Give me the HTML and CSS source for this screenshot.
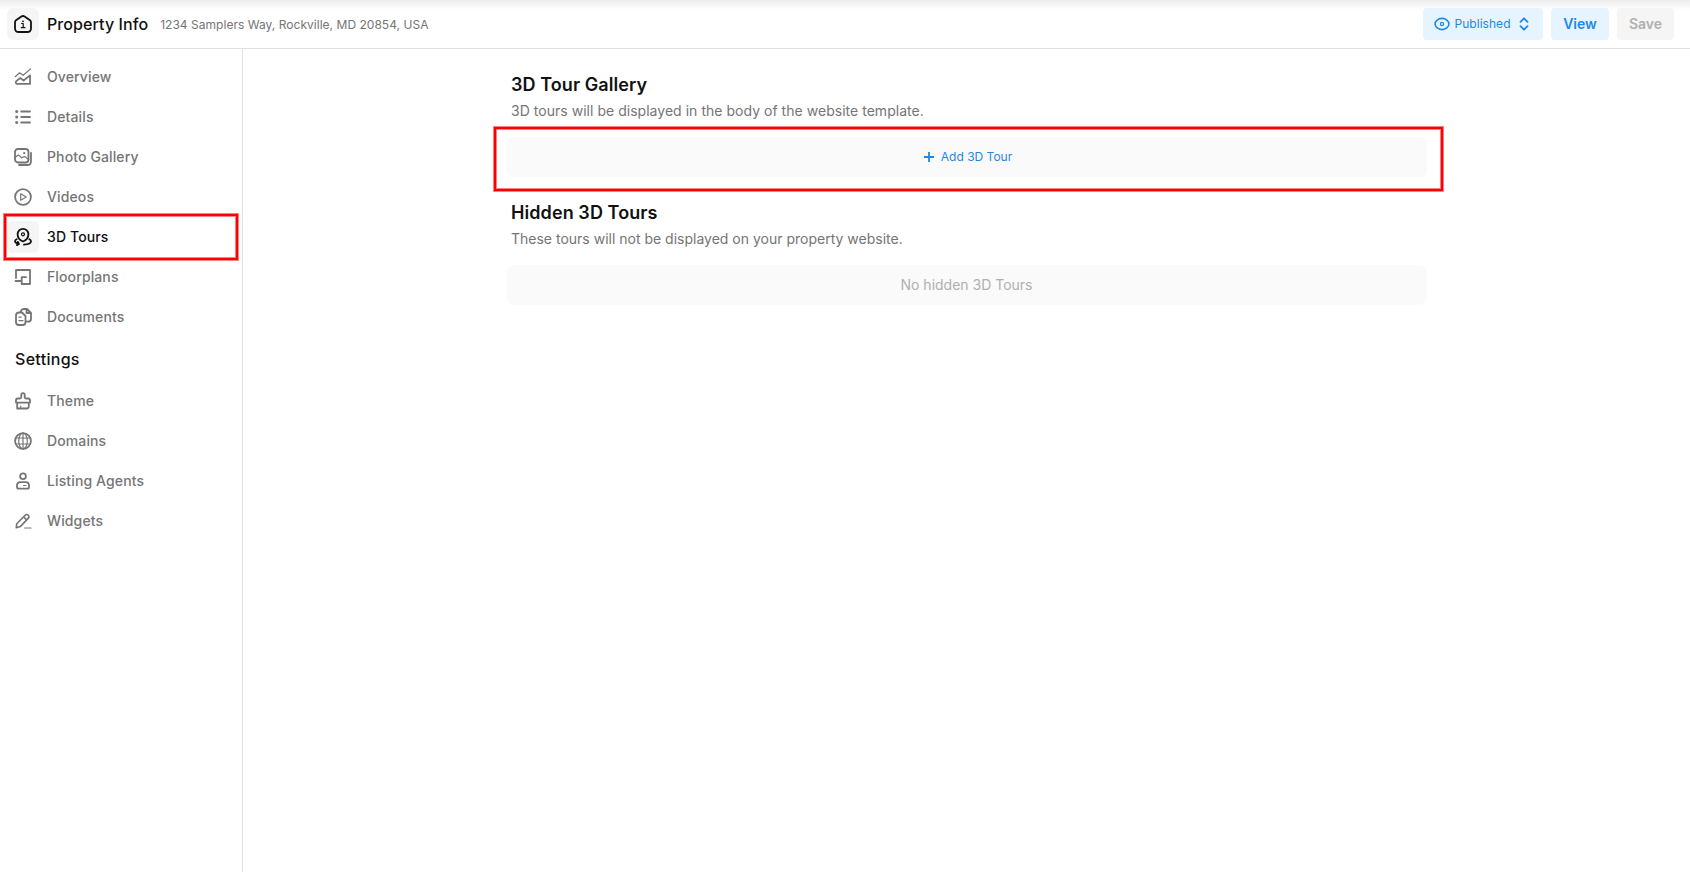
FILE: index.html
```html
<!DOCTYPE html>
<html lang="en">
<head>
<meta charset="utf-8">
<title>Property Info</title>
<link rel="stylesheet" href="styles.css">
</head>
<body>
<header class="topbar">
  <span class="icon-box icon-box-active">
    <svg class="icon icon-home" viewBox="0 0 18 18"><path d="M1 7.200Q1 6 2 5.300L7.400 1.500Q9 .5 10.600 1.500L16 5.300Q17 6 17 7.200V13.200Q17 17 13.200 17H4.800Q1 17 1 13.200Z"/><path class="thin" d="M7.600 8.500H9.200V12.500M7.300 12.700H11"/><circle class="dot" cx="9" cy="6.300" r=".9"/></svg>
  </span>
  <h1 class="title">Property Info</h1>
  <span class="address">1234 Samplers Way, Rockville, MD 20854, USA</span>
  <div class="actions">
    <button class="btn btn-status">
      <svg class="icon-eye" viewBox="0 0 16 14"><ellipse cx="8" cy="7" rx="6.900" ry="5.600"/><circle class="thin" cx="8" cy="7" r="1.600"/></svg>
      <span>Published</span>
      <svg class="icon-sort" viewBox="0 0 10 14"><path d="M1.500 4.800 5 1.300 8.500 4.800M1.500 9.200 5 12.700 8.500 9.200"/></svg>
    </button>
    <button class="btn btn-view">View</button>
    <button class="btn btn-save">Save</button>
  </div>
</header>
<div class="body">
  <nav class="sidebar">
    <a class="item"><span class="icon-box"><svg class="icon" viewBox="0 0 18 18"><path class="thin" d="M1.200 8.700 5.600 4.800 9.200 7.300 16.600.9"/><path d="M2 13.400 6.200 10 9.600 12.500 16 7.400V15.900H3Q1.500 15.900 2 13.400Z"/></svg></span><span class="label">Overview</span></a>
    <a class="item"><span class="icon-box"><svg class="icon" viewBox="0 0 18 18"><path d="M7.200 3.500H16M7.200 9H16M7.200 14.500H16"/><circle class="dot" cx="2.700" cy="3.500" r="1.500"/><circle class="dot" cx="2.700" cy="9" r="1.500"/><circle class="dot" cx="2.700" cy="14.500" r="1.500"/></svg></span><span class="label">Details</span></a>
    <a class="item"><span class="icon-box"><svg class="icon" viewBox="0 0 18 18"><rect x="1" y="1" width="13.500" height="13.500" rx="3"/><path class="thin" d="M1 9.500 3.500 7.500Q4.500 6.800 5.500 7.700L7.700 10 9.500 8.800Q10.500 8.200 11.500 9L14.500 11.600"/><circle class="dot" cx="10.200" cy="5.200" r="1.100"/><path d="M17 4.800V13.200Q17 17 13.200 17H5"/></svg></span><span class="label">Photo Gallery</span></a>
    <a class="item"><span class="icon-box"><svg class="icon" viewBox="0 0 18 18"><circle cx="9" cy="9" r="7.900"/><path class="thin" d="M6.700 5.800V12.200L12.200 9Z"/></svg></span><span class="label">Videos</span></a>
    <a class="item item-active"><span class="icon-box icon-box-active"><svg class="icon" viewBox="0 0 18 18"><path d="M9 13.500C6.800 12.700 3.600 10.300 3.600 6.300A5.400 5.400 0 0 1 14.400 6.300C14.400 10.300 11.200 12.700 9 13.500Z"/><circle class="thin" cx="9" cy="6.300" r="1.500"/><path d="M2.600 11.300Q1 12.200 1 13.200 1 14.700 4.300 15.700M3.900 13.900 5 15.900 2.900 17.100M15.400 11.300Q17 12.200 17 13.300 17 16.200 10 16.700"/></svg></span><span class="label">3D Tours</span></a>
    <a class="item"><span class="icon-box"><svg class="icon" viewBox="0 0 18 18"><path d="M2 10V2H16V16H7.700V9.200H12M1.500 13H7"/></svg></span><span class="label">Floorplans</span></a>
    <a class="item"><span class="icon-box"><svg class="icon" viewBox="0 0 18 18"><path d="M2 7.700Q2 4.500 5 4.500H8L11.500 8V14.300Q11.500 17 8.700 17H4.700Q2 17 2 14.300ZM6.800 4.300Q6.800 1 10.100 1H13L17 5V10.700Q17 13.700 14 13.700H12M12.500 1.300V5H16.700"/><path class="thin" d="M5 9.200H7M5 12.700H9"/></svg></span><span class="label">Documents</span></a>
    <h2 class="group">Settings</h2>
    <a class="item"><span class="icon-box"><svg class="icon" viewBox="0 0 18 18"><path d="M3.200 10.600H14.800V14.300Q14.800 16.500 12.600 16.500H3.200ZM3.200 10.600H2V8.300Q2 6.500 3.800 6.500H5.700Q7.300 6.500 7.300 5V2.800Q7.300 1.200 9 1.200 10.700 1.200 10.700 2.800V5Q10.700 6.500 12.300 6.500H14.200Q16 6.500 16 8.300V10.600H14.800"/><path class="thin" d="M6.700 16V14"/></svg></span><span class="label">Theme</span></a>
    <a class="item"><span class="icon-box"><svg class="icon" viewBox="0 0 18 18"><circle cx="9" cy="9" r="7.900"/><ellipse class="thin" cx="9" cy="9" rx="4.300" ry="8"/><path class="thin" d="M9 1V17M1.800 6H16.200M1.800 12H16.200"/></svg></span><span class="label">Domains</span></a>
    <a class="item"><span class="icon-box"><svg class="icon" viewBox="0 0 18 18"><circle cx="9" cy="4.200" r="2.900"/><path d="M3 13.700Q3 10.200 6.400 10.200H11.600Q15 10.200 15 13.700V15Q15 16.700 13.300 16.700H4.700Q3 16.700 3 15Z"/><path class="thin" d="M9.500 13.500H12"/></svg></span><span class="label">Listing Agents</span></a>
    <a class="item"><span class="icon-box"><svg class="icon" viewBox="0 0 18 18"><path class="mid" d="M2.300 15.700 2.700 11.800 11.200 3.200Q12.700 1.800 14.200 3.200 15.700 4.800 14.200 6.400L6.300 14.600ZM9.600 4.900 12.700 8"/><path class="thin" d="M10.700 16H17"/></svg></span><span class="label">Widgets</span></a>
  </nav>
  <main class="content">
    <section class="section">
      <h2 class="heading">3D Tour Gallery</h2>
      <p class="desc desc-wide">3D tours will be displayed in the body of the website template.</p>
      <div class="panel-wrap"><button class="panel panel-add"><svg class="icon-plus" viewBox="0 0 10 10"><path d="M5 0V10M0 5H10"/></svg><span class="label">Add 3D Tour</span></button></div>
    </section>
    <section class="section">
      <h2 class="heading">Hidden 3D Tours</h2>
      <p class="desc">These tours will not be displayed on your property website.</p>
      <div class="panel panel-empty">No hidden 3D Tours</div>
    </section>
  </main>
</div>
</body>
</html>
```
FILE: styles.css
```css
* { box-sizing: border-box; }
body { margin: 0; height: 872px; overflow: hidden; display: flex; flex-direction: column; background: #fff; color: #111; font-family: Inter, "Liberation Sans", sans-serif; font-size: 14px; }
h1, h2, p { margin: 0; }
button { border: 0; font-family: inherit; }
svg { fill: none; stroke: currentColor; stroke-width: 1.8; stroke-linejoin: round; stroke-linecap: round; flex: none; }
.thin { stroke-width: 1.2; }
.mid { stroke-width: 1.6; }
.dot { fill: currentColor; stroke: none; }
.icon { width: 18px; height: 18px; }

.topbar { height: 49px; flex: none; display: flex; align-items: center; padding: 0 16px 0 7px; border-bottom: 1px solid #e0e0e0; background: linear-gradient(#ededed, #fff 10px); }
.title { margin-left: 8px; font-size: 16px; font-weight: 500; letter-spacing: .08px; }
.address { margin-left: 12px; font-size: 12px; letter-spacing: .03px; color: #757575; }
.actions { margin-left: auto; display: flex; gap: 8px; }
.btn { height: 32px; border-radius: 4px; display: flex; align-items: center; justify-content: center; padding: 0 0 2px; font-size: 14px; font-weight: 600; }
.btn-status { width: 120px; gap: 4px; padding: 0 3px 1px 0; font-size: 12px; font-weight: 400; letter-spacing: .05px; background: #e6f4ff; color: #1e88e5; }
.btn-view { width: 58px; background: #e6f4ff; color: #1e88e5; }
.btn-save { width: 57px; background: #f5f5f5; color: #b0b0b0; }
.icon-eye { width: 16px; height: 14px; stroke-width: 1.6; }
.icon-sort { width: 10px; height: 14px; margin-left: 4px; }

.icon-box { width: 32px; height: 32px; flex: none; border-radius: 6px; display: flex; align-items: center; justify-content: center; }
.icon-box-active { background: #f5f5f5; }

.body { flex: 1; display: flex; min-height: 0; }
.sidebar { width: 243px; flex: none; border-right: 1px solid #e0e0e0; padding: 8px 3px 0; }
.item { height: 40px; display: flex; align-items: center; gap: 8px; padding-left: 4px; font-weight: 500; letter-spacing: .12px; color: #757575; }
.label { padding-bottom: 2px; }
.item-active { color: #111; position: relative; }
.group { height: 44px; padding: 0 12px; line-height: 44px; font-size: 16px; font-weight: 500; letter-spacing: .3px; }

/* Red callout frames */
.item-active::after, .panel-wrap::after { content: ""; position: absolute; border: 2px solid #f00; box-shadow: 0 0 0 1px #ff8080, inset 0 0 0 1px #ff8080; pointer-events: none; }
.item-active::after { inset: -3px 1px -3px 1px; }
.panel-wrap::after { inset: -10px -16px -14px -13px; }

.content { width: 920px; margin: 22px 0 0 264px; }
.section { height: 128px; }
.heading { padding-left: 4px; line-height: 28px; font-size: 18px; font-weight: 600; letter-spacing: .08px; }
.desc { padding-left: 4px; line-height: 24px; margin-bottom: 14px; color: #757575; }
.desc-wide { letter-spacing: .03px; }
.panel { width: 100%; height: 40px; display: flex; align-items: center; justify-content: center; background: #fafafa; border-radius: 6px; }
.panel-wrap { position: relative; }
.panel-add { gap: 7px; padding: 0 0 0 2px; font-size: 12px; color: #1e88e5; }
.panel-empty { padding: 0 1px 2px 0; border-radius: 8px; color: #b0b0b0; }
.icon-plus { width: 10px; height: 10px; stroke-linecap: butt; }
```
